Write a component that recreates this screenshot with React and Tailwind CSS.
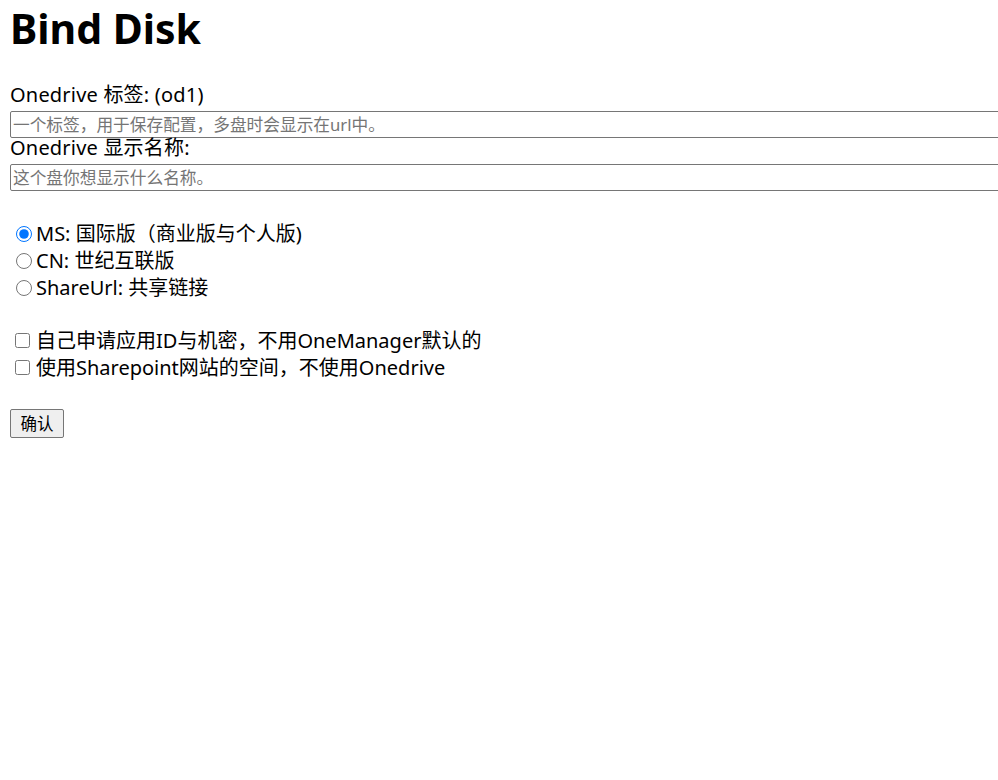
import React from "react";

const FONT = { fontFamily: '"Noto Sans", "Noto Sans CJK SC", sans-serif' };

export default function App() {
  return (
    <div
      className="w-full min-h-[780px] overflow-hidden bg-white pl-[10px] text-black"
      style={FONT}
    >
      <h1 className="m-0 text-[41px] font-bold leading-[57px] h-[57px]">Bind Disk</h1>

      <div className="mt-[28px] flex flex-col">
        <label className="text-[20px] leading-[20px] h-[20px] mb-[6px] whitespace-nowrap tracking-[0.2px]">
          Onedrive 标签: (od1)
        </label>
        <input
          type="text"
          placeholder="一个标签，用于保存配置，多盘时会显示在url中。"
          className="block w-[1000px] h-[27px] border border-[#767676] rounded-[2px] px-[2px] text-[16.7px] leading-[20px] placeholder:text-[#757575] outline-none"
        />
        <label className="text-[20px] leading-[20px] h-[20px] mb-[6px] whitespace-nowrap tracking-[0.2px]">
          Onedrive 显示名称:
        </label>
        <input
          type="text"
          placeholder="这个盘你想显示什么名称。"
          className="block w-[1000px] h-[27px] border border-[#767676] rounded-[2px] px-[2px] text-[16.7px] leading-[20px] placeholder:text-[#757575] outline-none"
        />
      </div>

      <div className="mt-[29px] flex flex-col">
        {[
          ["MS: 国际版（商业版与个人版)", true],
          ["CN: 世纪互联版", false],
          ["ShareUrl: 共享链接", false],
        ].map(([t, c]) => (
          <label key={t} className="flex items-center h-[27px] text-[20px] leading-[27px] whitespace-nowrap">
            <input
              type="radio"
              name="type"
              defaultChecked={c}
              className="m-0 ml-[6px] mr-[4px] w-[16px] h-[16px] shrink-0"
            />
            <span>{t}</span>
          </label>
        ))}
      </div>

      <div className="mt-[26px] flex flex-col">
        {[
          "自己申请应用ID与机密，不用OneManager默认的",
          "使用Sharepoint网站的空间，不使用Onedrive",
        ].map((t) => (
          <label key={t} className="flex items-center h-[27px] text-[20px] leading-[27px] whitespace-nowrap">
            <input
              type="checkbox"
              className="m-0 ml-[5px] mr-[6px] w-[15px] h-[15px] shrink-0"
            />
            <span>{t}</span>
          </label>
        ))}
      </div>

      <div className="mt-[28px]">
        <button
          type="button"
          className="h-[29px] w-[54px] border border-[#767676] rounded-[2px] bg-[#efefef] text-[16.5px] leading-[20px] text-black"
        >
          确认
        </button>
      </div>
    </div>
  );
}
